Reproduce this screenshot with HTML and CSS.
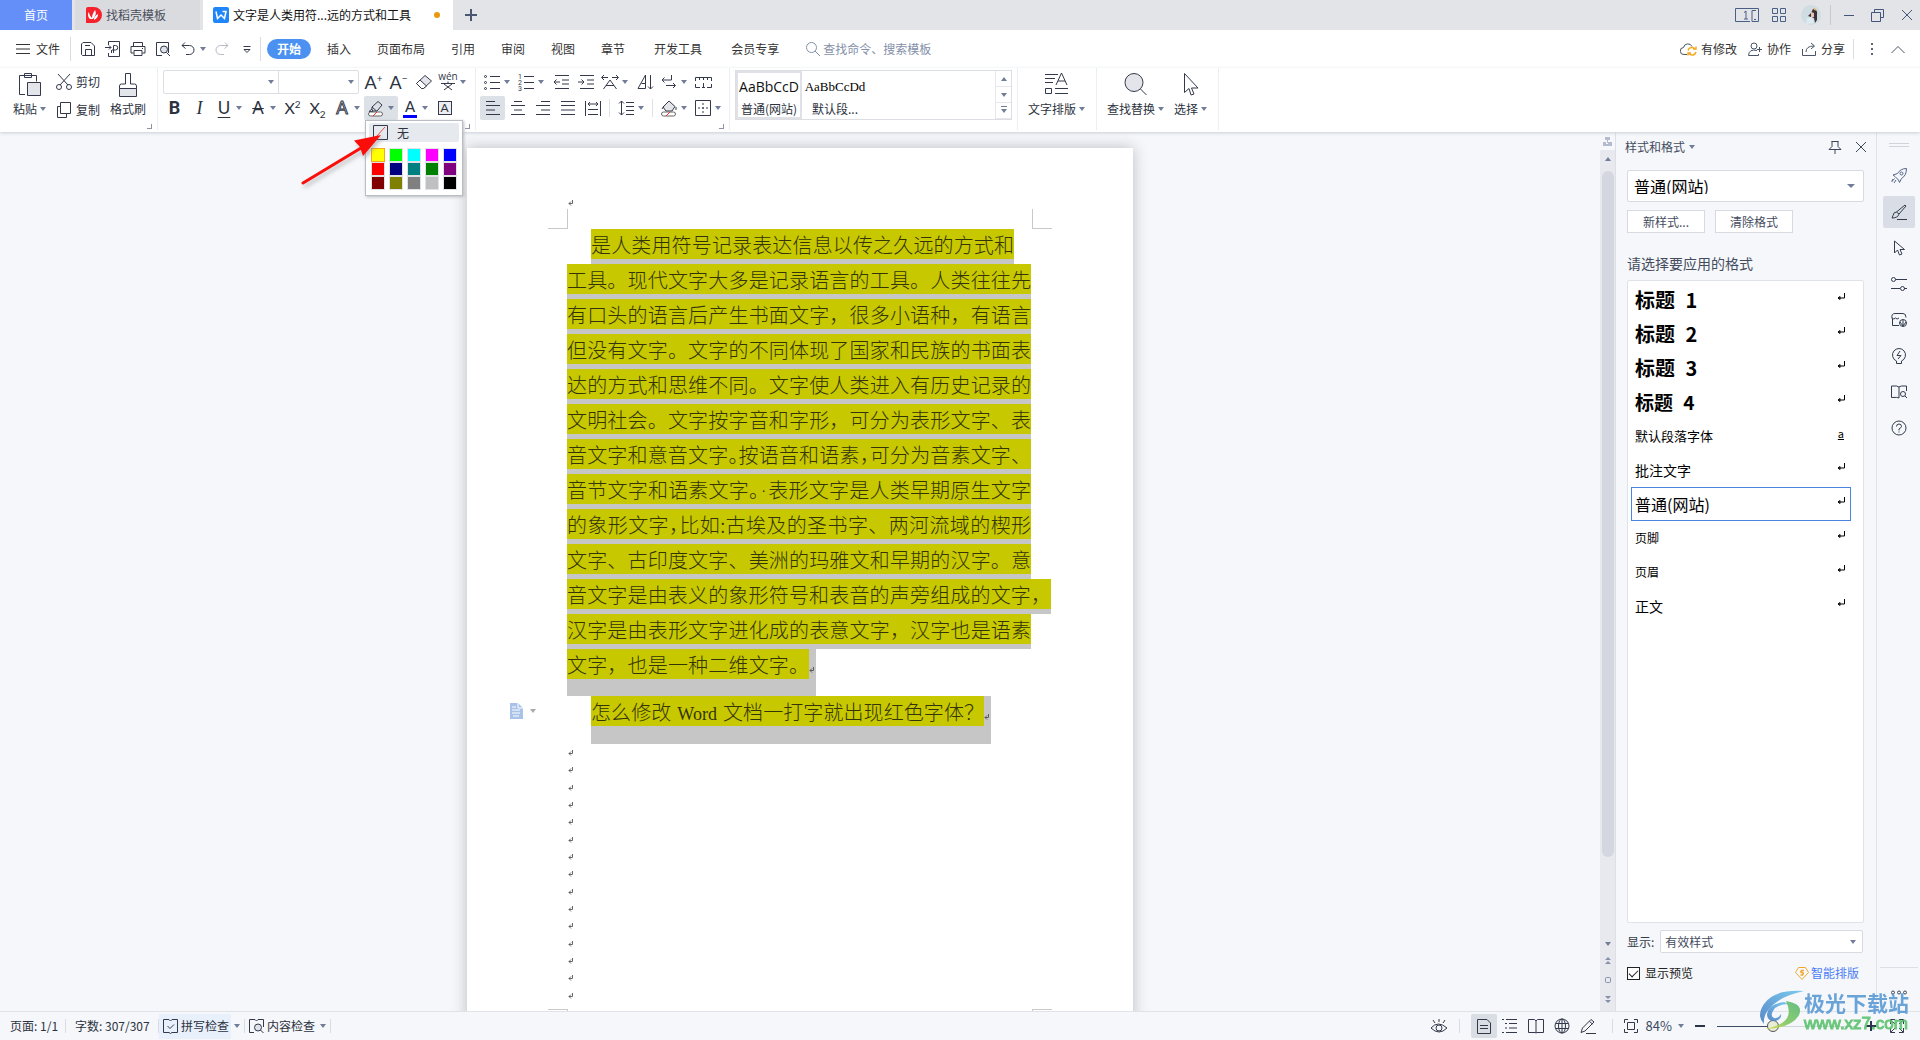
FILE: index.html
```html
<!DOCTYPE html>
<html lang="zh-CN">
<head>
<meta charset="utf-8">
<title>文字是人类用符...远的方式和工具</title>
<link rel="stylesheet" href="styles.css">
</head>
<body>
<svg class="defs" aria-hidden="true">
  <symbol id="ret" viewBox="0 0 10 10"><path d="M8.500 1v5H2M4 4.500 2 6l2 1.500z" fill="none" stroke="currentColor"/></symbol>
  <symbol id="pm" viewBox="0 0 6 7"><path d="M4.500 0v3.500H1M3 1.500l-2 2 2 2" fill="none" stroke="currentColor" stroke-width="0.800"/></symbol>
</svg>
<div class="app">
  <header class="titlebar">
    <button class="tab home">首页</button>
    <button class="tab docer"><svg width="16" height="16" viewBox="0 0 16 16"><path d="M0 2Q0 0 2 0h6a8 8 0 0 1 0 16H0z" fill="#f5222d"/><path d="M4 12C1 9 2 6 3 5c0 3 2 5 4 7M6 11C6 7 8 5 9 3c2 4 0 6-2 9M8 12c0-2 2-4 4-5 0 3-1 4-4 6z" fill="#fff"/></svg>找稻壳模板</button>
    <button class="tab active"><svg width="16" height="16" viewBox="0 0 16 16"><rect width="16" height="16" rx="2" fill="#1e86f8"/><path d="M3 4.500l1.500 7L8 8l3.500 3.500 1.500-7H9.500" fill="none" stroke="#fff" stroke-width="1.500"/></svg><span class="tabname">文字是人类用符...远的方式和工具</span><i class="dot"></i></button>
    <button class="plus" aria-label="新建"><svg width="12" height="12"><path d="M6 0v12M0 6h12" stroke="#4a5672" stroke-width="2"/></svg></button>
    <div class="win">
      <svg width="24" height="14" fill="none" stroke="#4a5f85"><path d="M15 13.500H.5V.5h23v13H17V2.500h4M17 13.500h4M19 11.500h2"/><path d="M9 4.500l2-1.500v8M9 11h4"/></svg>
      <svg width="14" height="14" fill="none" stroke="#4a5f85"><path d="M.5.5h5v5h-5zM8.500.5h5v5h-5zM.5 8.500h5v5h-5zM8.500 8.500h5v5h-5z"/></svg>
      <svg class="avatar" width="20" height="20" viewBox="0 0 20 20"><circle cx="10" cy="10" r="10" fill="#cfdde3"/><path d="M12 4q5 0 4 6l0 5-2 3-1-5-6-2 3-3z" fill="#3c3036"/><path d="M10 7l3 1v4l-3 0z" fill="#e8c4b8"/><path d="M12 3q3 0 4 3l-3-1z" fill="#d8b36a"/><path d="M5 19l1-6 5-1 2 6z" fill="#dcebf0"/></svg>
      <i class="vs"></i>
      <svg width="10" height="14"><path d="M0 7.500h10" stroke="#43557a"/></svg>
      <svg width="13" height="13" fill="none" stroke="#43557a"><path d="M3.500 3.500v-3h9v8h-3M.5 3.500h9v9h-9z"/></svg>
      <svg width="12" height="12" stroke="#43557a"><path d="M1 1l10 10M11 1L1 11"/></svg>
    </div>
  </header>

  <nav class="menu">
    <button class="file"><svg width="14" height="10" stroke="#333"><path d="M0 .5h14M0 5h14M0 9.500h14"/></svg>文件</button>
    <i class="vs tall"></i>
    <div class="quick">
      <svg viewBox="0 0 16 16"><path d="M1.500 13.500V3L3 1.500h8L14.500 5v9.500H2.500zM5.500 14V8.500h6V14M5 4.500h5"/></svg>
      <svg viewBox="0 0 16 16"><path d="M3.500 4V.5h11v15h-11V12M0 6.500h6M4 4.500l2 2-2 2M6.500 12V9M8.500 12V4.500h2a2 2 0 0 1 0 4.500H7"/></svg>
      <svg viewBox="0 0 16 16"><path d="M3.500 5V1.500h9V5M3.500 12H1V5.500h14V12h-2.500M4 9.500h8v5H4zM12 7.500h1"/></svg>
      <svg viewBox="0 0 16 16"><path d="M7 14.500H1.500v-13h12V12"/><circle cx="9" cy="8.500" r="3.500" fill="#dfe2e8"/><path d="M11.500 11.500L15 15"/></svg>
      <svg viewBox="0 0 16 16" class="undo"><path d="M5 1.500L2 4.500l3.500 3M2 4.500h7.500a4.500 4.500 0 0 1 0 9H6"/></svg><i class="caret"></i>
      <svg viewBox="0 0 16 16" class="redo"><path d="M11 1.500l3 3-3.500 3M14 4.500H6.500a4.500 4.500 0 0 0 0 9H10"/></svg>
      <svg viewBox="0 0 16 16" class="more"><path d="M4.500 5.500h7M5 8.500l3 3 3-3z"/></svg>
    </div>
    <i class="vs tall"></i>
    <button class="pill">开始</button>
    <button>插入</button><button>页面布局</button><button>引用</button><button>审阅</button><button>视图</button><button>章节</button><button class="wide">开发工具</button><button class="wide">会员专享</button>
    <label class="search"><svg width="16" height="16" fill="none" stroke="#8490a8"><circle cx="6.500" cy="6.500" r="5"/><path d="M10 10l5 5"/></svg><input type="text" placeholder="查找命令、搜索模板" aria-label="查找命令"></label>
    <div class="share">
      <button><svg width="17" height="14" fill="none" stroke="#4a5568"><path d="M7 12.500H4A3.500 3.500 0 0 1 3.500 5.500a4.500 4.500 0 0 1 8.500-1"/><path d="M8 8.500a4 4 0 0 1 7-1.500M16 4.500V7h-3M16 10a4 4 0 0 1-7 1.500M8 13.500V11h3" stroke="#f5a81c" stroke-width="1.500"/></svg>有修改</button>
      <button><svg width="15" height="14" fill="none" stroke="#4a5568"><circle cx="6" cy="4" r="3"/><path d="M9 8.500q-8-2-8.500 5h10V12M9 7.500h5M11.500 5v5"/></svg>协作</button>
      <button><svg width="15" height="14" fill="none" stroke="#4a5568"><path d="M.5 7v6.500h13V9M4 10q0-6 8-6M9 1l3.500 3L9 7"/></svg>分享</button>
      <i class="vs"></i>
      <svg width="3" height="12" fill="#5b6678"><path d="M0 0h2v2H0zM0 5h2v2H0zM0 10h2v2H0z"/></svg>
      <svg width="14" height="9" fill="none" stroke="#4a5568"><path d="M.5 8L7 1.500 13.500 8"/></svg>
    </div>
  </nav>

  <section class="ribbon">
    <div class="group clip">
      <button class="big"><svg width="24" height="26" fill="none" stroke="#33394a"><path d="M7 22.500H1.500V3.500h17v6M6.500 1.500h7v4h-7z"/><path d="M9.500 10.500h13v13h-13z" fill="#e3e5ea"/></svg><span>粘贴<i class="caret"></i></span></button>
      <div class="pair">
        <button><svg width="18" height="18" fill="none" stroke="#33394a"><path d="M3 1l10 11M15 1L5 12"/><circle cx="4" cy="14" r="2.500"/><circle cx="14" cy="14" r="2.500"/></svg>剪切</button>
        <button><svg width="18" height="18" fill="none" stroke="#33394a"><path d="M5.500 1.500h10v11h-10zM5 5.500H2.500v11h9V13"/></svg>复制</button>
      </div>
      <button class="big brush"><svg width="20" height="26" fill="none" stroke="#33394a"><path d="M7.500 1.500h5V12h4q2 0 2 2v2.500h-17V14q0-2 2-2h4z"/><path d="M1.500 16.500v8h17v-8z" fill="#e3e5ea"/></svg><span>格式刷</span></button>
      <i class="corner"></i>
    </div>
    <div class="group font">
      <div class="row">
        <div class="combo"><span class="c1"><input type="text" aria-label="字体"><i class="caret"></i></span><span class="c2"><input type="text" aria-label="字号"><i class="caret"></i></span></div>
        <button class="tb"><span class="la">A<sup>+</sup></span></button>
        <button class="tb"><span class="la">A<sup>−</sup></span></button>
        <button class="tb" aria-label="清除格式"><svg width="18" height="16" fill="none" stroke="#33394a"><path d="M1.500 9.500l8.500-8 6.500 5.500-8 7.500H6.500z" fill="#e3e5ea"/><path d="M5 6l6.500 6-3 2.500h-2l-5-5z" fill="#fff"/></svg></button>
        <button class="tb tc"><svg width="18" height="18" class="i"><text class="wen" x="9" y="7" text-anchor="middle">wén</text><path d="M2 10.500h14M9 8.500v2M5 11l8 6M13 11l-8 6"/></svg><i class="caret"></i></button>
      </div>
      <div class="row">
        <button class="tb"><b class="lb">B</b></button>
        <button class="tb"><em class="li">I</em></button>
        <button class="tb tc"><span class="lu">U</span><i class="caret"></i></button>
        <button class="tb tc"><span class="ls">A</span><i class="caret"></i></button>
        <button class="tb"><span class="lx">X<sup>2</sup></span></button>
        <button class="tb"><span class="lx">X<sub>2</sub></span></button>
        <button class="tb tc"><span class="lo">A</span><i class="caret"></i></button>
        <div class="hl">
          <button class="tb tc on" aria-label="突出显示"><svg width="18" height="17" fill="none" stroke="#33394a"><path d="M11 1.500l4 3.500-5 6H6l-1-1V7zM5 7l4.500 4M5 9l-3 2.500h4"/><rect x="1.500" y="12" width="14" height="4" rx="2" fill="#fff" stroke="#666"/><path d="M6 16l4-4" stroke="#e33"/></svg><i class="caret"></i></button>
          <div class="drop">
            <button class="none"><svg width="15" height="15" fill="none" stroke="#33394a"><path d="M.5.5h14v14H.5z"/><path d="M3 12l9-10" stroke="#e34a4a"/></svg>无</button>
            <div class="swatches"><i class="s1"></i><i class="s2"></i><i class="s3"></i><i class="s4"></i><i class="s5"></i><i class="s6"></i><i class="s7"></i><i class="s8"></i><i class="s9"></i><i class="s10"></i><i class="s11"></i><i class="s12"></i><i class="s13"></i><i class="s14"></i><i class="s15"></i></div>
          </div>
        </div>
        <button class="tb tc"><span class="lc">A</span><i class="caret"></i></button>
        <button class="tb"><span class="lbx">A</span></button>
      </div>
      <i class="corner"></i>
    </div>
    <div class="group para">
      <div class="row">
        <button class="tb tc"><svg width="16" height="16" class="i"><path d="M6 2.500h10M6 8.500h10M6 14.500h10"/><circle cx="1.500" cy="2.500" r="1"/><circle cx="1.500" cy="8.500" r="1"/><circle cx="1.500" cy="14.500" r="1"/></svg><i class="caret"></i></button>
        <button class="tb tc"><svg width="16" height="18" class="i"><path d="M6 3.500h10M6 9.500h10M6 15.500h10"/><g class="n"><text x="0" y="6">1</text><text x="0" y="12">2</text><text x="0" y="18">3</text></g></svg><i class="caret"></i></button>
        <button class="tb"><svg width="16" height="14" class="i"><path d="M2 .5h14M9 5h7M9 9h7M2 13.500h14M1 7h6M3.500 4.500L1 7l2.500 2.500"/></svg></button>
        <button class="tb"><svg width="16" height="14" class="i"><path d="M2 .5h14M9 5h7M9 9h7M2 13.500h14M0 7h6M3.500 4.500L6 7 3.500 9.500"/></svg></button>
        <button class="tb tc"><svg width="18" height="16" class="i"><path d="M1 3.500h6M11 3.500h6M3 1L.5 3.500 3 6M15 1l2.500 2.500L15 6M2.500 15L9 6l6.500 9M5 11.500h8"/></svg><i class="caret"></i></button>
        <button class="tb"><svg width="16" height="16" class="i"><path d="M1 14.500L8.500 1v13.500zM4.500 9.500h4"/><path d="M13.500 1v14M11 12.500l2.500 2.500 2.500-2.500"/></svg></button>
        <button class="tb tc"><svg width="16" height="16" class="i"><path d="M10.500 1v5H1M3.500 3.500L1 6l2.500 2.500M5 11.500h9M12 9l2.500 2.500L12 14"/></svg><i class="caret"></i></button>
        <button class="tb"><svg width="17" height="13" class="i"><path d="M.5 5V1.500h16V5M4.500 1.500V4M8.500 1.500V4M12.500 1.500V4M.5 8v3.500H5M16.500 8v3.500H12M7 11.500h3M8.500 7v4"/></svg></button>
      </div>
      <div class="row">
        <button class="tb on"><svg width="16" height="14" class="i"><path d="M1 .5h9M1 4.500h14M1 9h9M1 13.500h14"/></svg></button>
        <button class="tb"><svg width="16" height="14" class="i"><path d="M4 .5h8M1 4.500h14M4 9h8M1 13.500h14"/></svg></button>
        <button class="tb"><svg width="16" height="14" class="i"><path d="M6 .5h9M1 4.500h14M6 9h9M1 13.500h14"/></svg></button>
        <button class="tb"><svg width="16" height="14" class="i"><path d="M1 .5h14M1 4.500h14M1 9h14M1 13.500h14"/></svg></button>
        <button class="tb"><svg width="18" height="15" class="i"><path d="M1.500 0v15M16.500 0v15M4 3h10M6 1L4 3l2 2M12 1l2 2-2 2M4 8.500h10M4 13.500h10"/></svg></button>
        <i class="sep"></i>
        <button class="tb tc"><svg width="16" height="16" class="i"><path d="M3.500 1v14M1 3.500L3.500 1 6 3.500M1 12.500L3.500 15 6 12.500M8 2.500h8M8 6.500h8M8 10.500h8M8 14.500h8"/></svg><i class="caret"></i></button>
        <i class="sep"></i>
        <button class="tb tc"><svg width="18" height="17" class="i"><path d="M3 7l6-6 6 5.500-3 4.500H6z" fill="#e3e5ea"/><path d="M2 9l2-3M16 10V7"/><rect x="1.500" y="12" width="14" height="4" rx="2" fill="#fff" stroke="#666"/><path d="M6 16l4-4" stroke="#e33"/></svg><i class="caret"></i></button>
        <button class="tb tc"><svg width="16" height="16" class="i"><path d="M.5.5h15v15H.5z"/><path d="M8 3v10M3 8h10" stroke-dasharray="2 2"/></svg><i class="caret"></i></button>
      </div>
      <i class="corner"></i>
    </div>
    <div class="group styles">
      <div class="gallery">
        <button class="st sel"><span class="p1">AaBbCcD</span><span>普通(网站)</span></button>
        <button class="st"><span class="p2">AaBbCcDd</span><span>默认段...</span></button>
        <div class="gbtn"><button aria-label="上"><i class="up"></i></button><button aria-label="下"><i class="caret"></i></button><button aria-label="更多"><i class="caret bar"></i></button></div>
      </div>
    </div>
    <div class="group one"><button class="big"><svg width="24" height="26" class="i"><path d="M0 2.500h13M0 6.500h10M0 10.500h8M11 13l5.500-12L22 13M13 9h7M.5 16.500h6v5h-6zM10 16.500h13M10 21.500h13"/></svg><span>文字排版<i class="caret"></i></span></button></div>
    <div class="group two"><button class="big"><svg width="24" height="26" class="i"><circle cx="10" cy="10.500" r="9" fill="#e3e5ea"/><path d="M16.500 17l6 6"/></svg><span>查找替换<i class="caret"></i></span></button><button class="big"><svg width="18" height="26" class="i"><path d="M2.500 1.500v19l4.500-4 2 6.500 3-1-2.500-6H16z"/></svg><span>选择<i class="caret"></i></span></button></div>
  </section>

  <main class="work">
    <div class="canvas">
      <article class="page">
        <div class="head"><svg class="pm"><use href="#pm"/></svg></div>
        <div class="marks"><i class="tl"></i><i class="tr"></i></div>
        <div class="body">
          <p class="ln first">是人类用符号记录表达信息以传之久远的方式和</p>
          <p class="ln">工具。现代文字大多是记录语言的工具。人类往往先</p>
          <p class="ln">有口头的语言后产生书面文字，很多小语种，有语言</p>
          <p class="ln">但没有文字。文字的不同体现了国家和民族的书面表</p>
          <p class="ln">达的方式和思维不同。文字使人类进入有历史记录的</p>
          <p class="ln">文明社会。文字按字音和字形，可分为表形文字、表</p>
          <p class="ln">音文字和意音文字<span class="h">。</span>按语音和语素<span class="h">，</span>可分为音素文字、</p>
          <p class="ln">音节文字和语素文字<span class="h">。</span><span class="space">·</span>表形文字是人类早期原生文字</p>
          <p class="ln">的象形文字<span class="h">，</span>比如:古埃及的圣书字、两河流域的楔形</p>
          <p class="ln">文字、古印度文字、美洲的玛雅文和早期的汉字。意</p>
          <p class="ln over">音文字是由表义的象形符号和表音的声旁组成的文字，</p>
          <p class="ln">汉字是由表形文字进化成的表意文字，汉字也是语素</p>
          <div class="tail"><p class="ln">文字，也是一种二维文字。</p><svg class="pm"><use href="#pm"/></svg></div>
          <div class="tail q"><p class="ln">怎么修改<span class="word">Word</span>文档一打字就出现红色字体？</p><svg class="pm"><use href="#pm"/></svg>
            <span class="smart"><svg width="14" height="17"><path d="M0 1h8l5 5v11H0z" fill="#a9c3e8"/><path d="M8 1v5h5M2 5h4M2 8h8M2 11h8M3 14h6" stroke="#fff" fill="none"/></svg><i class="caret"></i></span></div>
          <div class="empties"><svg class="pm"><use href="#pm"/></svg><svg class="pm"><use href="#pm"/></svg><svg class="pm"><use href="#pm"/></svg><svg class="pm"><use href="#pm"/></svg><svg class="pm"><use href="#pm"/></svg><svg class="pm"><use href="#pm"/></svg><svg class="pm"><use href="#pm"/></svg><svg class="pm"><use href="#pm"/></svg><svg class="pm"><use href="#pm"/></svg><svg class="pm"><use href="#pm"/></svg><svg class="pm"><use href="#pm"/></svg><svg class="pm"><use href="#pm"/></svg><svg class="pm"><use href="#pm"/></svg><svg class="pm"><use href="#pm"/></svg><svg class="pm"><use href="#pm"/></svg></div>
        </div>
        <div class="marks foot"><i class="tl"></i><i class="tr"></i></div>
      </article>
    </div>
    <div class="scroll">
      <svg class="rul" width="10" height="18" fill="#b4bbcf"><path d="M2 5h5v3H2zM0 10h3v3H0zM4 8h1v3H4zM5 10h4v3H5zM0 12h9v2H0z"/></svg>
      <div class="track"><i class="up"></i><div class="thumb"></div><div class="fill"></div><i class="caret"></i>
        <svg width="8" height="8" fill="#8790aa"><path d="M4 0l3 3H1zM4 4l3 3H1z"/></svg>
        <svg width="8" height="8" fill="none" stroke="#8790aa"><rect x="1.500" y="1.500" width="5" height="5" rx="1"/></svg>
        <svg width="8" height="8" fill="#8790aa"><path d="M4 4l3-3H1zM4 8l3-3H1z"/></svg>
      </div>
    </div>
    <aside class="panel">
      <div class="ptitle">样式和格式<i class="caret"></i><svg class="pin" width="14" height="14"><path d="M3.500 1.500h7M4 1.500v5L1 9.500h12l-3-3v-5M7 10v4" fill="none" stroke="#3d4659"/></svg><svg width="12" height="12" stroke="#3d4659"><path d="M1 1l10 10M11 1L1 11"/></svg></div>
      <div class="selbox big-sel"><select aria-label="当前样式"><option>普通(网站)</option></select><i class="caret"></i></div>
      <div class="btns"><button>新样式...</button><button>清除格式</button></div>
      <h2>请选择要应用的格式</h2>
      <ul class="list">
        <li class="h1">标题 <span>1</span><svg><use href="#ret"/></svg></li>
        <li class="h1">标题 <span>2</span><svg><use href="#ret"/></svg></li>
        <li class="h1">标题 <span>3</span><svg><use href="#ret"/></svg></li>
        <li class="h4">标题 <span>4</span><svg><use href="#ret"/></svg></li>
        <li class="sm wide13">默认段落字体<u>a</u></li>
        <li class="md">批注文字<svg><use href="#ret"/></svg></li>
        <li class="lg cur">普通(网站)<svg><use href="#ret"/></svg></li>
        <li class="sm">页脚<svg><use href="#ret"/></svg></li>
        <li class="sm">页眉<svg><use href="#ret"/></svg></li>
        <li class="md">正文<svg><use href="#ret"/></svg></li>
      </ul>
      <div class="show"><label for="show">显示:</label><div class="selbox"><select id="show"><option>有效样式</option></select><i class="caret"></i></div></div>
      <div class="prev"><label><input type="checkbox" checked>显示预览</label><a href="#"><svg width="14" height="13" fill="none" stroke="#f0a830"><path d="M3.500.5h7l3 5-6.500 7-6.500-7z"/><path d="M9 3.500H6.500q-1.500 1.500 0 2h1q1.500.5 0 2.500H5.500" stroke-width="1.500"/></svg>智能排版</a></div>
    </aside>
    <nav class="side">
      <i class="handle"></i>
      <button aria-label="推荐"><svg class="r"><path d="M15.500.5q-6 0-9 5L2 7l2 1.500 3.500 3.500 1 2.500 2-4q5-3 5-10zM2 11l-1 2M5 12l-2 3M3.500 10.500L.5 14"/><circle cx="10.500" cy="5.500" r="1.500"/></svg></button>
      <button class="on" aria-label="样式"><svg class="r dark"><path d="M14 1l1 1-7 8-2.500-2zM5.500 8q-3 0-3.500 3.500L1 14q6 0 7-4M6 15.500h10"/></svg></button>
      <button aria-label="选择"><svg class="r dark"><path d="M3.500 1v12l3-3 2 5 2.500-1-2-4.500h4.500z"/></svg></button>
      <button aria-label="属性"><svg class="r dark"><circle cx="2.500" cy="3.500" r="2"/><path d="M4.500 3.500H16M0 12.500h9M13 12.500h3"/><circle cx="11.500" cy="12.500" r="2"/></svg></button>
      <button aria-label="素材"><svg class="r dark"><path d="M8 13.500H1.500v-7M1 6.500q-1-5 3-5h8q3 0 3 4M1 6q2 2 3.500 0 1.500 2 3.500 0"/><circle cx="12" cy="11" r="3.500"/><path d="M12 14V8M9 10l3 4 3-4"/></svg></button>
      <button aria-label="灵感"><svg class="r dark"><path d="M5.500 13a6.500 6.500 0 1 1 5 0v2.500h-5zM9 3L6 7.500h4L7 11"/></svg></button>
      <button aria-label="阅读"><svg class="r dark"><path d="M8 14V3Q7 1.500.5 2v11.500Q7 13 8 14M8 3q1-1.500 7.500-1v5"/><circle cx="12" cy="10" r="2.500"/><path d="M14 12l2 2"/></svg></button>
      <button aria-label="帮助"><svg class="r dark"><circle cx="8" cy="8" r="7"/><path d="M5.500 6.500q0-2.500 2.500-2.500t2.500 2.500q0 1-2.500 2.500v1.500M8 11.500v1"/></svg></button>
      <i class="line"></i>
      <svg class="dots" width="16" height="5" fill="none" stroke="#3d4659"><circle cx="2" cy="2.500" r="1.500"/><circle cx="8" cy="2.500" r="1.500"/><circle cx="14" cy="2.500" r="1.500"/></svg>
    </nav>
  </main>

  <footer class="status">
    <span class="pg">页面: 1/1</span><i class="vs"></i>
    <span class="wc">字数: 307/307</span><i class="vs"></i>
    <button class="chk hot"><svg width="15" height="15" class="i"><path d="M6 .5H.5v13H6l1.500 1 1.500-1h5.500V.5H9L7.500 2zM4.500 7l2.500 2.500 4-4"/></svg>拼写检查</button><i class="caret"></i><i class="vs"></i>
    <button class="chk"><svg width="15" height="15" class="i"><path d="M5 13.500H.5V.5H6L7.500 2 9 .5h5.500V8"/><circle cx="9" cy="8.500" r="3.500" fill="#dfe2e8"/><path d="M11.500 11l3 3"/></svg>内容检查</button><i class="caret"></i><i class="vs"></i>
    <div class="views">
      <svg width="18" height="16" class="i"><path d="M1 10q7-8 16 0-8 8-16 0zM9 1v3M3 2l2 3M15 2l-2 3"/><circle cx="9" cy="10" r="3"/></svg>
      <i class="vs"></i>
      <button class="on" aria-label="页面视图"><svg width="14" height="15" class="i"><path d="M.5.5H10L13.500 4v10.500H.5zM3 6.500h8M3 9.500h8"/></svg></button>
      <button aria-label="大纲"><svg width="15" height="14" class="i"><path d="M0 .5h2M4 .5h11M3 4.500h2M7 4.500h8M3 9h2M7 9h8M0 13.500h2M4 13.500h11"/></svg></button>
      <button aria-label="阅读版式"><svg width="16" height="15" class="i"><path d="M8 14V2L6.500.5h-6v13H7L8 14l1-.5h6.500V.5h-6L8 2"/></svg></button>
      <button aria-label="Web版式"><svg width="16" height="16" class="i"><circle cx="8" cy="8" r="7"/><ellipse cx="8" cy="8" rx="3.500" ry="7"/><path d="M8 1v14M1.500 5.500h13M1.500 10.500h13"/></svg></button>
      <button aria-label="写作"><svg width="16" height="16" class="i"><path d="M11 1.500L14 4 5 13l-4 1.500L2.500 10zM9.500 3.500l3 2.500M6 15.500h10"/></svg></button>
      <i class="vs"></i>
      <svg width="14" height="14" class="i"><path d="M.5 4V.5H4M10 .5h3.500V4M13.500 10v3.500H10M4 13.500H.5V10M3.500 3.500h7v7h-7z"/></svg>
      <span class="pct">84%</span><i class="caret"></i>
      <svg class="minus" width="10" height="10"><path d="M0 5h10" stroke="#2b3448" stroke-width="2"/></svg>
      <input type="range" min="0" max="100" value="40" aria-label="缩放">
      <svg class="pls" width="10" height="10"><path d="M0 5h10M5 0v10" stroke="#2b3448" stroke-width="2"/></svg>
      <svg width="14" height="14" class="i"><path d="M.5 5V.5H5M9 .5h4.500V5M13.500 9v4.500H9M5 13.500H.5V9M1 1l4 4M13 1L9 5M1 13l4-4M13 13L9 9"/></svg>
    </div>
  </footer>

  <svg class="arrow" width="92" height="66"><path d="M4 52L62 17" stroke="#fb0d0a" stroke-width="3" stroke-linecap="round"/><path d="M82 4L55 9.500l6 6.500 3 9z" fill="#fb0d0a"/></svg>
  <div class="mark">
    <svg width="44" height="42" viewBox="0 0 44 42"><defs><linearGradient id="g1" x1="0" y1="1" x2="1" y2="0"><stop offset="0" stop-color="#4a7dc4"/><stop offset="1" stop-color="#6cc8ee"/></linearGradient><linearGradient id="g2" x1="0" y1="1" x2="1" y2="0"><stop offset="0" stop-color="#e6e04a"/><stop offset=".4" stop-color="#82c860"/><stop offset="1" stop-color="#57b878"/></linearGradient></defs><path d="M44 1Q14-1 4 14-4 26 4 34q-1-9 6-16Q20 6 44 1z" fill="url(#g1)"/><path d="M24 12Q8 14 7 24q0 8 9 7 6-2 5-7-3 5-7 4-4-2-1-7 4-7 16-7z" fill="url(#g1)"/><path d="M26 11q18 3 13 14-7 13-34 14 18-4 22-11 4-6-1-17z" fill="url(#g2)"/></svg>
    <div><b>极光下载站</b><span>www.xz7.com</span></div>
  </div>
</div>
</body>
</html>
```
FILE: styles.css
```css
* { box-sizing: border-box; }
body { margin: 0; font: 12px/16px "Noto Sans CJK SC", sans-serif; color: #333; background: #f5f7fa; }
button { font: inherit; color: inherit; background: none; border: 0; padding: 0; margin: 0; white-space: nowrap; }
input, select { font: inherit; color: inherit; margin: 0; }
i { font-style: normal; flex: none; }
svg { flex: none; }
.defs { position: absolute; width: 0; height: 0; }
.i { fill: none; stroke: #33394a; overflow: visible; }
.caret { display: inline-block; width: 0; height: 0; border: 3px solid transparent; border-top: 4px solid #717d98; border-bottom: 0; }
.up { width: 0; height: 0; border: 3px solid transparent; border-bottom: 4px solid #717d98; border-top: 0; }
.vs { width: 1px; height: 14px; background: #d9dce2; }
.app { position: relative; height: 100vh; display: flex; flex-direction: column; overflow: hidden; }

/* title bar */
.titlebar { display: flex; flex: none; height: 30px; background: #e2e4e8; }
.tab { display: flex; align-items: center; }
.home { width: 72px; margin-right: 3px; justify-content: center; background: #648ff9; color: #fff; }
.docer { width: 125px; margin-right: 3px; padding-left: 11px; gap: 4px; background: #dadbdf; color: #4a4f5c; }
.active { width: 250px; padding-left: 10px; gap: 4px; background: #fff; color: #111; }
.tabname { flex: 1; text-align: left; }
.dot { width: 6px; height: 6px; border-radius: 3px; background: #e89a0c; margin-right: 13px; }
.plus { width: 36px; display: flex; align-items: center; justify-content: center; }
.win { margin-left: auto; display: flex; align-items: center; padding-right: 7px; gap: 13px; }
.win .avatar { margin: 0 -4px 0 2px; }
.win .vs { height: 20px; background: #c6c9d0; }
.win .vs + svg + svg { margin-left: 4px; }
.win .vs + svg + svg + svg { margin-left: 4px; }

/* menu */
.menu { display: flex; align-items: center; flex: none; height: 38px; background: #fff; padding-left: 16px; }
.menu button { margin-right: 26px; }
.menu .file { display: flex; align-items: center; gap: 6px; margin-right: 10px; }
.tall { height: 24px; }
.menu button.wide { margin: 0 26px 0 3px; }
.quick { display: flex; align-items: center; width: 189px; padding-left: 9px; gap: 9px; }
.quick svg { width: 16px; height: 16px; fill: none; stroke: #33394a; }
.quick .caret { margin-left: -5px; }
.quick .redo { stroke: #b4b9c4; margin-left: -1px; }
.menu .pill { width: 44px; height: 20px; border-radius: 10px; background: #4a91f2; color: #fff; font-weight: 700; margin: 0 16px 0 6px; }
.search { display: flex; align-items: center; }
.search input { width: 160px; border: 0; background: none; padding: 0 0 0 2px; outline: 0; }
.search input::placeholder { color: #8490a8; opacity: 1; }
.share { margin-left: auto; display: flex; align-items: center; padding-right: 15px; }
.share button { display: flex; align-items: center; gap: 4px; margin-right: 11px; }
.share .vs { height: 20px; margin: 0 17px 0 -3px; }
.share .vs + svg { margin-right: 17px; }

/* ribbon */
.ribbon { position: relative; z-index: 2; display: flex; flex: none; height: 64px; background: #fff; box-shadow: 0 1px 3px #c9cdd4; color: #2c3240; }
.group { position: relative; display: flex; height: 62px; border-right: 1px solid #edeef1; }
.corner { position: absolute; right: 5px; bottom: 1px; width: 5px; height: 5px; border: solid #8b93a5; border-width: 0 1px 1px 0; }
.clip { width: 158px; padding-left: 13px; }
.big { display: flex; flex-direction: column; align-items: center; padding-top: 4px; gap: 3px; }
.big .caret { margin: 0 0 3px 3px; }
.pair { display: flex; flex-direction: column; margin-left: 9px; gap: 8px; padding-top: 4px; }
.pair button { display: flex; align-items: center; gap: 3px; height: 20px; }
.brush { margin-left: 10px; }
.font { width: 318px; padding-left: 4px; flex-direction: column; padding-top: 1px; }
.para { width: 254px; padding-left: 4px; flex-direction: column; padding-top: 1px; }
.row { display: flex; height: 26px; align-items: center; }
.combo { display: flex; flex: none; width: 196px; height: 24px; margin: 0 2px 0 1px; border: 1px solid #dcdee3; border-radius: 2px; }
.combo span { display: flex; align-items: center; padding-right: 4px; min-width: 0; }
.combo input { flex: 1; min-width: 0; height: 20px; border: 0; outline: 0; }
.c1 { width: 115px; border-right: 1px solid #dcdee3; }
.c2 { flex: 1; }
.tb { flex: none; width: 25px; height: 24px; display: flex; align-items: center; justify-content: center; border-radius: 2px; }
.tc { width: 34px; }
.tc > span { width: 24px; }
.tc > svg { margin: 0 auto; }
.tc > .caret { margin-right: 4px; }
.tb.on { background: #dce1e7; }
.la, .lx { font: 18px/20px Lato, sans-serif; white-space: nowrap; }
.lx { font-size: 16px; }
.la sup, .lx sup, .lx sub { font-size: 10px; line-height: 0; }
.wen { font: 10px "Open Sans", sans-serif; fill: #33394a; stroke: none; }
.lb { font: 700 18px/20px Roboto, sans-serif; }
.li { font: italic 18px/20px "Liberation Serif", serif; }
.lu, .ls, .lo, .lc { font: 17px/18px Lato, sans-serif; text-align: center; }
.lu { text-decoration: underline; text-underline-offset: 3px; }
.ls { text-decoration: line-through 1px; }
.lo { color: #fff; -webkit-text-stroke: 1px #33394a; }
.tc > .lc { width: 14px; margin: 0 5px; height: 19px; line-height: 15px; font-size: 15px; border-bottom: 3px solid #0000fe; }
.lbx { width: 14px; height: 14px; border: 1px solid #33394a; background: #eceef1; font: 12px/12px Lato, sans-serif; }
.sep { width: 1px; height: 18px; margin: 0 4px; background: #dfe1e6; }
.n text { font: 7px Roboto, sans-serif; fill: #33394a; stroke: none; }
.hl { position: relative; }
.drop { position: absolute; left: 1px; top: 24px; width: 98px; height: 76px; padding: 2px 3px; background: #fff; border: 1px solid #b9bdc6; box-shadow: 1px 1px 3px #bbb; }
.none { display: flex; align-items: center; gap: 9px; width: 90px; height: 19px; padding-left: 4px; background: #e6e9ee; border-radius: 2px; }
.swatches { display: grid; grid-template-columns: repeat(5, 14px); gap: 0 4px; padding: 6px 2px; }
.swatches i { height: 14px; border: 1px solid #e0e2e6; }
.swatches .s1 { background: #ff0; border-color: #f5a81c; }
.s2 { background: #0f0; } .s3 { background: #0ff; } .s4 { background: #f0f; } .s5 { background: #00f; }
.s6 { background: #f00; } .s7 { background: #000080; } .s8 { background: #008080; } .s9 { background: #008000; } .s10 { background: #800080; }
.s11 { background: #800000; } .s12 { background: #808000; } .s13 { background: #808080; } .s14 { background: #c0c0c0; } .s15 { background: #000; }
.styles { width: 288px; padding: 2px 5px; }
.gallery { display: flex; width: 277px; height: 50px; border: 1px solid #dcdee3; }
.st { display: flex; flex-direction: column; align-items: center; width: 66px; padding-top: 8px; gap: 6px; }
.st.sel { border: 2px solid #dfe1e7; padding-top: 6px; }
.p1 { font: 14px/16px "Open Sans", sans-serif; color: #111; }
.p2 { font: 13px/16px "Liberation Serif", serif; color: #000; }
.gbtn { width: 16px; margin-left: auto; display: flex; flex-direction: column; border-left: 1px solid #e5e7eb; }
.gbtn button { flex: 1; display: flex; align-items: center; justify-content: center; border-bottom: 1px solid #e5e7eb; }
.bar { position: relative; }
.bar::before { content: ""; position: absolute; left: -3px; top: -7px; width: 6px; height: 1px; background: #717d98; }
.one { width: 79px; padding-left: 10px; }
.two { width: 122px; padding-left: 10px; gap: 10px; }

/* workspace */
.work { display: flex; flex: 1; min-height: 0; }
.canvas { flex: 1; overflow: hidden; padding-top: 16px; }
.page { width: 666px; height: 1000px; margin: 0 auto; background: #fff; box-shadow: 0 0 14px #b9bcc2; color: #333408; }
.pm { width: 6px; height: 7px; color: #444; overflow: visible; }
.head { height: 61px; padding: 52px 0 0 101px; line-height: 0; }
.marks { display: flex; justify-content: space-between; height: 20px; padding: 0 81px; }
.marks i { width: 20px; border: solid #c9c9c9; border-width: 0 1px 1px 0; }
.marks .tr { border-width: 0 0 1px 1px; }
.body { padding-left: 100px; }
.ln { margin: 0; width: 464px; height: 35px; background: #c8c800; border-bottom: 5px solid #c6c6c6; font-size: 20px; line-height: 32px; font-weight: 300; text-align-last: justify; white-space: nowrap; }
.first { width: 423px; margin-left: 24px; }
.over { width: 484px; }
.h { font-feature-settings: "halt"; }
.space { font-family: "Open Sans", sans-serif; margin: 0 2px; line-height: 20px; }
.tail { position: relative; display: flex; align-items: flex-start; width: 249px; height: 47px; background: #c6c6c6; }
.tail .ln { width: 242px; height: 30px; border: 0; }
.tail .pm { margin-top: 18px; }
.q { width: 400px; height: 48px; margin-left: 24px; }
.q .ln { width: 393px; }
.word { font: 18px/20px "Liberation Serif", serif; margin: 0 6px; }
.smart { position: absolute; left: -81px; top: 6px; display: flex; align-items: center; gap: 6px; }
.smart .caret { border-top-color: #aaa; }
.empties { display: flex; flex-direction: column; justify-content: space-between; height: 256px; padding: 6px 0 0 1px; }
.foot { margin-top: 9px; }
.foot i { border-width: 1px 1px 0 0; }
.foot .tr { border-width: 1px 0 0 1px; }
.scroll { width: 15px; display: flex; flex-direction: column; align-items: center; }
.track { flex: 1; width: 15px; background: #e8e9ee; display: flex; flex-direction: column; align-items: center; padding: 7px 0 8px; }
.track svg { margin-top: 11px; }
.thumb { flex: 81; width: 12px; margin-top: 10px; border-radius: 6px; background: #d4d7e0; }
.fill { flex: 10; }

/* style panel */
.panel { width: 261px; border-left: 1px solid #dcdfe5; padding: 0 12px 30px 11px; display: flex; flex-direction: column; color: #444c5e; }
.ptitle { display: flex; align-items: center; height: 30px; margin: 0 -10px 8px -2px; gap: 4px; }
.ptitle .pin { margin: 0 9px 0 auto; }
.ptitle svg:last-child { margin-right: 7px; }
.selbox { position: relative; display: flex; align-items: center; width: 237px; background: #fff; border: 1px solid #d7dae0; border-radius: 2px; }
.selbox select { appearance: none; border: 0; background: none; width: 100%; padding: 0 20px 0 4px; outline: 0; }
.selbox .caret { position: absolute; right: 6px; }
.big-sel { height: 32px; flex: none; }
.big-sel select { font-size: 16px; color: #000; padding-left: 6px; height: 28px; }
.big-sel .caret { right: 8px; border-width: 4px 4px 0; }
.btns { display: flex; gap: 10px; margin-top: 8px; }
.btns button { width: 78px; height: 23px; background: #fff; border: 1px solid #d7dae0; }
.panel h2 { margin: 19px 0 6px; font: 14px/22px "Noto Sans CJK SC", sans-serif; }
.list { flex: 1; margin: 0; padding: 2px 12px 0 3px; width: 237px; list-style: none; background: #fff; border: 1px solid #dfe2e7; border-radius: 2px; color: #000; }
.list li { display: flex; align-items: center; height: 34px; padding: 0 5px 0 4px; white-space: pre; }
.list svg { width: 10px; height: 10px; margin: 0 0 6px auto; }
.list u { margin: 0 2px 6px auto; font-size: 11px; }
.list .h1, .list .h4 { font-size: 20px; font-weight: 700; gap: 6px; }
.list .h4 { font-size: 19px; }
.sm { font-size: 12px; } .md { font-size: 14px; } .lg { font-size: 16px; } .wide13 { font-size: 13px; }
.list .cur { border: 1px solid #4a86e0; padding: 0 4px 0 3px; }
.show { display: flex; align-items: center; margin-top: 7px; color: #333a48; }
.show .selbox { width: 203px; height: 23px; margin-left: 6px; color: #444c5e; }
.prev { display: flex; justify-content: space-between; margin-top: 12px; color: #222; padding-right: 5px; }
.prev label, .prev a { display: flex; align-items: center; gap: 5px; }
.prev a { gap: 2px; color: #4a7cf6; text-decoration: none; }
.prev input { appearance: none; width: 13px; height: 13px; border: 1px solid #222; background: #fff; display: grid; place-items: center; }
.prev input::before { content: ""; width: 8px; height: 4px; border: solid #222; border-width: 0 0 1px 1px; rotate: -45deg; margin-bottom: 2px; }

/* side bar */
.side { width: 44px; border-left: 1px solid #dfe2e7; display: flex; flex-direction: column; align-items: center; padding-top: 11px; }
.handle { width: 20px; height: 4px; border: solid #d0d3da; border-width: 1px 0; margin-bottom: 13px; }
.side button { width: 32px; height: 32px; margin-bottom: 4px; border-radius: 2px; display: grid; place-items: center; }
.side .on { background: #d9dee6; }
.r { width: 16px; height: 16px; fill: none; stroke: #56648a; overflow: visible; }
.dark { stroke: #333c4e; }
.line { width: 38px; height: 1px; background: #dcdfe5; margin-top: auto; }
.dots { margin: 22px 0 16px; }

/* status bar */
.status { display: flex; align-items: center; flex: none; height: 29px; border-top: 1px solid #dfe2e7; padding-left: 10px; color: #2c3240; }
.pg { width: 55px; } .wc { width: 92px; padding-left: 9px; }
.chk { display: flex; align-items: center; gap: 3px; height: 25px; padding: 0 2px 0 4px; }
.hot { background: #e8f0fb; }
.status > .caret { margin: 0 4px 0 3px; }
.views { margin-left: auto; display: flex; align-items: center; padding-right: 16px; }
.views > .vs { margin: 0 11px; }
.views button { width: 26px; height: 24px; display: grid; place-items: center; }
.views .on { background: #d9dee4; border-radius: 2px; }
.pct { margin: 0 6px 0 8px; color: #3d4862; font-size: 13px; }
.minus { margin: 0 12px 0 11px; }
.pls { margin: 0 14px 0 11px; }
.views input { appearance: none; width: 138px; height: 14px; background: linear-gradient(90deg, #3c4a66 57px, #d0d4dc 57px) center / 100% 1px no-repeat; }
.views input::-webkit-slider-thumb { appearance: none; width: 12px; height: 12px; border-radius: 6px; border: 1px solid #555; background: #e9edd8; }

/* overlays */
.arrow { position: absolute; left: 299px; top: 131px; z-index: 5; fill: none; filter: drop-shadow(2px 3px 2px #8888); }
.mark { position: absolute; right: 11px; bottom: 7px; z-index: 5; display: flex; align-items: center; opacity: .9; pointer-events: none; }
.mark div { display: flex; flex-direction: column; }
.mark b { font-size: 21px; line-height: 26px; color: #5b9bd5; }
.mark span { font: 17px/18px "Liberation Sans", sans-serif; color: #5cc26e; -webkit-text-stroke: 1px #5cc26e; }
```
